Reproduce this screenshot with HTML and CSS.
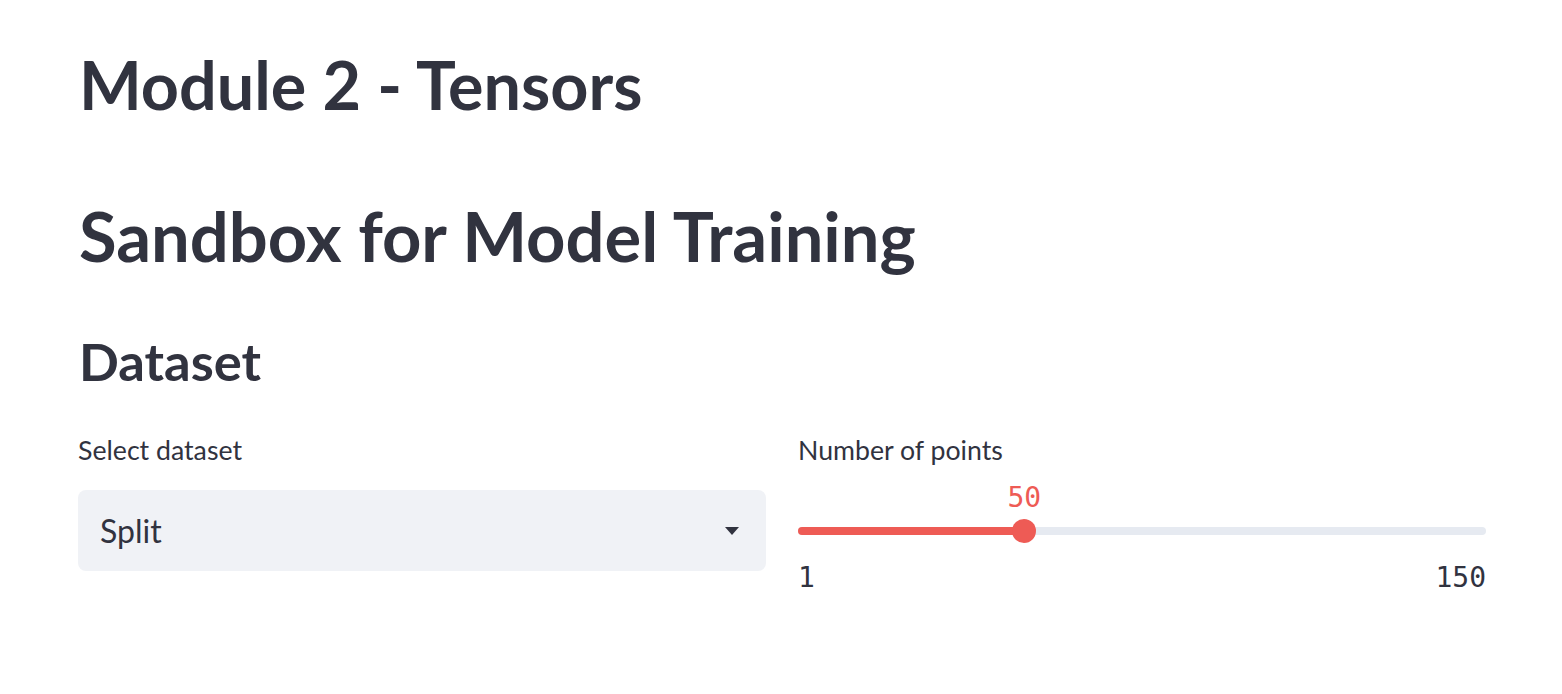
FILE: index.html
```html
<!DOCTYPE html>
<html>
<head>
<meta charset="utf-8">
<link rel="stylesheet" href="styles.css">
</head>
<body>
<main class="main">
  <h1 class="title">Module 2 - Tensors</h1>
  <h2 class="header">Sandbox for Model Training</h2>
  <h3 class="subheader">Dataset</h3>
  <div class="columns">
    <div class="column">
      <label class="label">Select dataset</label>
      <div class="select">
        <span class="select-value">Split</span>
        <svg class="caret" width="16" height="10" viewBox="0 0 16 10"><path d="M1 1 H15 L8 9 Z" fill="#31333f"/></svg>
      </div>
    </div>
    <div class="column">
      <label class="label">Number of points</label>
      <div class="slider">
        <div class="track-wrap">
          <div class="track">
            <div class="fill" style="width: 32.9%"></div>
          </div>
          <div class="thumb" style="left: 32.9%">
            <span class="thumb-value">50</span>
          </div>
        </div>
        <div class="ticks">
          <span>1</span>
          <span>150</span>
        </div>
      </div>
    </div>
  </div>
</main>
</body>
</html>
```

FILE: styles.css
```css
* { box-sizing: border-box; }
html, body {
  margin: 0;
  padding: 0;
  background: #ffffff;
  color: #31333f;
  font-family: "Lato", "Noto Sans", sans-serif;
}
.main {
  padding: 36px 76px 0 78px;
}
.title, .header, .subheader {
  margin: 0;
  font-weight: 700;
  color: #31333f;
}
.title {
  font-size: 66.5px;
  line-height: 96px;
  margin-left: 1px;
}
.header {
  font-size: 68.7px;
  line-height: 96px;
  margin-top: 56px;
  margin-left: 1px;
}
.subheader {
  font-size: 52.5px;
  line-height: 72px;
  margin-top: 41px;
  margin-left: 1px;
}
.columns {
  display: flex;
  gap: 32px;
  margin-top: 33px;
}
.column {
  flex: 1;
  display: flex;
  flex-direction: column;
}
.label {
  font-size: 26.7px;
  line-height: 40px;
  margin-bottom: 20px;
}
.select {
  height: 81px;
  background: #f0f2f6;
  border-radius: 8px;
  display: flex;
  align-items: center;
  justify-content: space-between;
  padding: 0 26px 0 22px;
}
.select-value {
  font-size: 32px;
}
.caret {
  display: block;
}
.slider {
  display: flex;
  flex-direction: column;
}
.track-wrap {
  position: relative;
  height: 70px;
  padding-top: 37px;
}
.track {
  width: 100%;
  height: 8px;
  border-radius: 4px;
  background: #e6eaf1;
  overflow: hidden;
}
.fill {
  height: 100%;
  background: #ee5b55;
}
.thumb {
  position: absolute;
  top: 29px;
  width: 24px;
  height: 24px;
  margin-left: -12px;
  border-radius: 50%;
  background: #ee5b55;
}
.thumb-value {
  position: absolute;
  bottom: 31px;
  left: 50%;
  transform: translateX(-50%);
  font-family: "DejaVu Sans Mono", monospace;
  font-size: 28px;
  line-height: 1;
  color: #ee5b55;
  white-space: nowrap;
}
.ticks {
  display: flex;
  justify-content: space-between;
  font-family: "DejaVu Sans Mono", monospace;
  font-size: 28px;
  line-height: 36px;
  color: #31333f;
}
```
